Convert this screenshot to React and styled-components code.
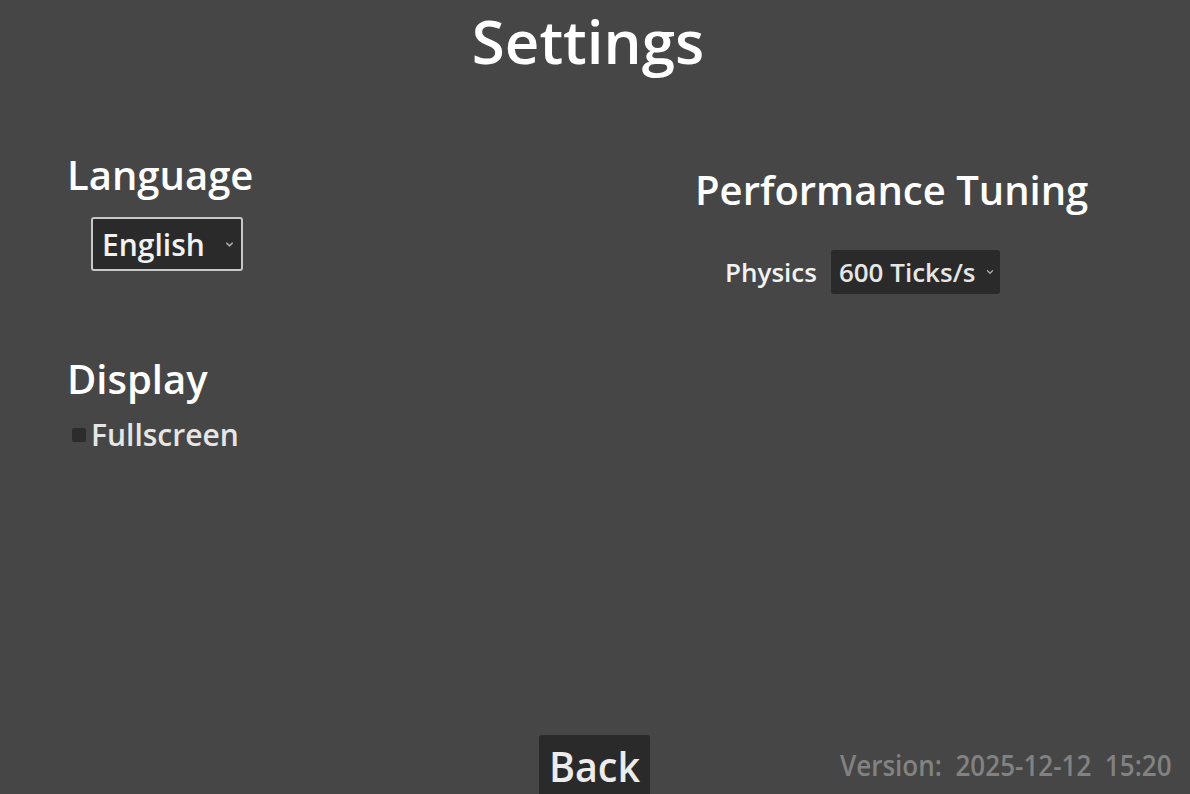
import React, { useState } from 'react';
import styled, { createGlobalStyle } from 'styled-components';

const GlobalStyle = createGlobalStyle`
  html, body {
    margin: 0;
    padding: 0;
    background: #464646;
    font-family: 'Open Sans', 'Noto Sans', sans-serif;
    color: #ffffff;
    overflow: hidden;
  }
`;

const Page = styled.div`
  width: 1190px;
  height: 794px;
  display: flex;
  flex-direction: column;
`;

const Title = styled.h1`
  margin: 0;
  padding: 1px 14px 0 0;
  font-size: 60px;
  font-weight: 600;
  line-height: 80px;
  text-align: center;
`;

const Columns = styled.div`
  display: grid;
  grid-template-columns: 628px 1fr;
  padding: 67px 0 0 67px;
  flex: 1;
`;

const Column = styled.section`
  display: flex;
  flex-direction: column;
  padding-top: ${(p) => p.offset || 0}px;
`;

const Heading = styled.h2`
  margin: 0;
  font-size: 40px;
  font-weight: 600;
  line-height: 54px;
`;

const Group = styled.div`
  display: flex;
  flex-direction: column;
  margin-bottom: ${(p) => p.spacing || 0}px;
`;

const Select = styled.div`
  display: flex;
  align-items: center;
  align-self: flex-start;
  box-sizing: border-box;
  background: #2a2a2a;
  border: ${(p) => (p.bordered ? '2px solid #c8c8c8' : 'none')};
  border-radius: 3px;
  color: #e6e6e6;
  font-weight: 600;
  justify-content: space-between;
`;

const LanguageSelect = styled(Select)`
  margin: 15px 0 0 24px;
  width: 152px;
  height: 54px;
  padding: 0 6px 0 9px;
  font-size: 30px;
  color: #f2f2f2;
`;

const PhysicsSelect = styled(Select)`
  width: 169px;
  height: 44px;
  padding: 0 5px 0 8px;
  font-size: 26px;
`;

const Chevron = ({ size = 10 }) => (
  <svg width={size} height={size} viewBox="0 0 10 10" fill="none">
    <path d="M2.5 3.8 L5 6.2 L7.5 3.8" stroke="#a8a8a8" strokeWidth="1.4" strokeLinecap="round" strokeLinejoin="round" />
  </svg>
);

const CheckRow = styled.label`
  display: flex;
  align-items: center;
  gap: 5px;
  margin: 9px 0 0 5px;
  font-size: 30px;
  font-weight: 600;
  color: #e6e6e6;
  line-height: 40px;
`;

const Box = styled.span`
  width: 14px;
  height: 14px;
  border-radius: 2px;
  background: ${(p) => (p.checked ? '#6c9ee6' : '#2c2c2c')};
  flex-shrink: 0;
`;

const SettingRow = styled.div`
  display: flex;
  align-items: center;
  gap: 14px;
  margin: 33px 0 0 30px;
`;

const SettingLabel = styled.span`
  font-size: 26px;
  font-weight: 600;
  color: #f2f2f2;
`;

const Footer = styled.footer`
  display: grid;
  grid-template-columns: 1fr auto 1fr;
  align-items: end;
  height: 59px;
`;

const BackButton = styled.button`
  grid-column: 2;
  width: 111px;
  height: 59px;
  padding: 0;
  margin-right: 2px;
  background: #2a2a2a;
  border: none;
  border-radius: 3px 3px 0 0;
  color: #ececec;
  font-family: inherit;
  font-size: 42px;
  font-weight: 600;
  line-height: 62px;
  cursor: pointer;
  overflow: hidden;
`;

const Condensed = styled.span`
  display: inline-block;
  transform: scaleX(${(p) => p.scale || 0.85});
  transform-origin: ${(p) => p.origin || 'center'};
`;

const Version = styled.div`
  grid-column: 3;
  justify-self: end;
  padding: 0 18px 15px 0;
  font-size: 28px;
  font-weight: 600;
  color: #828282;
  white-space: pre;
  line-height: 28px;
`;

const App = () => {
  const [fullscreen, setFullscreen] = useState(false);

  return (
    <React.Fragment>
      <GlobalStyle />
      <Page>
        <Title>Settings</Title>

        <Columns>
          <Column>
            <Group spacing={81}>
              <Heading>Language</Heading>
              <LanguageSelect bordered>
                <span>English</span>
                <Chevron size={11} />
              </LanguageSelect>
            </Group>

            <Group>
              <Heading>Display</Heading>
              <CheckRow onClick={() => setFullscreen(!fullscreen)}>
                <Box checked={fullscreen} />
                Fullscreen
              </CheckRow>
            </Group>
          </Column>

          <Column offset={15}>
            <Heading>Performance Tuning</Heading>
            <SettingRow>
              <SettingLabel>Physics</SettingLabel>
              <PhysicsSelect>
                <span>600 Ticks/s</span>
                <Chevron />
              </PhysicsSelect>
            </SettingRow>
          </Column>
        </Columns>

        <Footer>
          <BackButton>
            <Condensed scale={0.94}>Back</Condensed>
          </BackButton>
          <Version>
            <Condensed scale={0.93} origin="right">{'Version:  2025-12-12  15:20'}</Condensed>
          </Version>
        </Footer>
      </Page>
    </React.Fragment>
  );
};

export default App;
